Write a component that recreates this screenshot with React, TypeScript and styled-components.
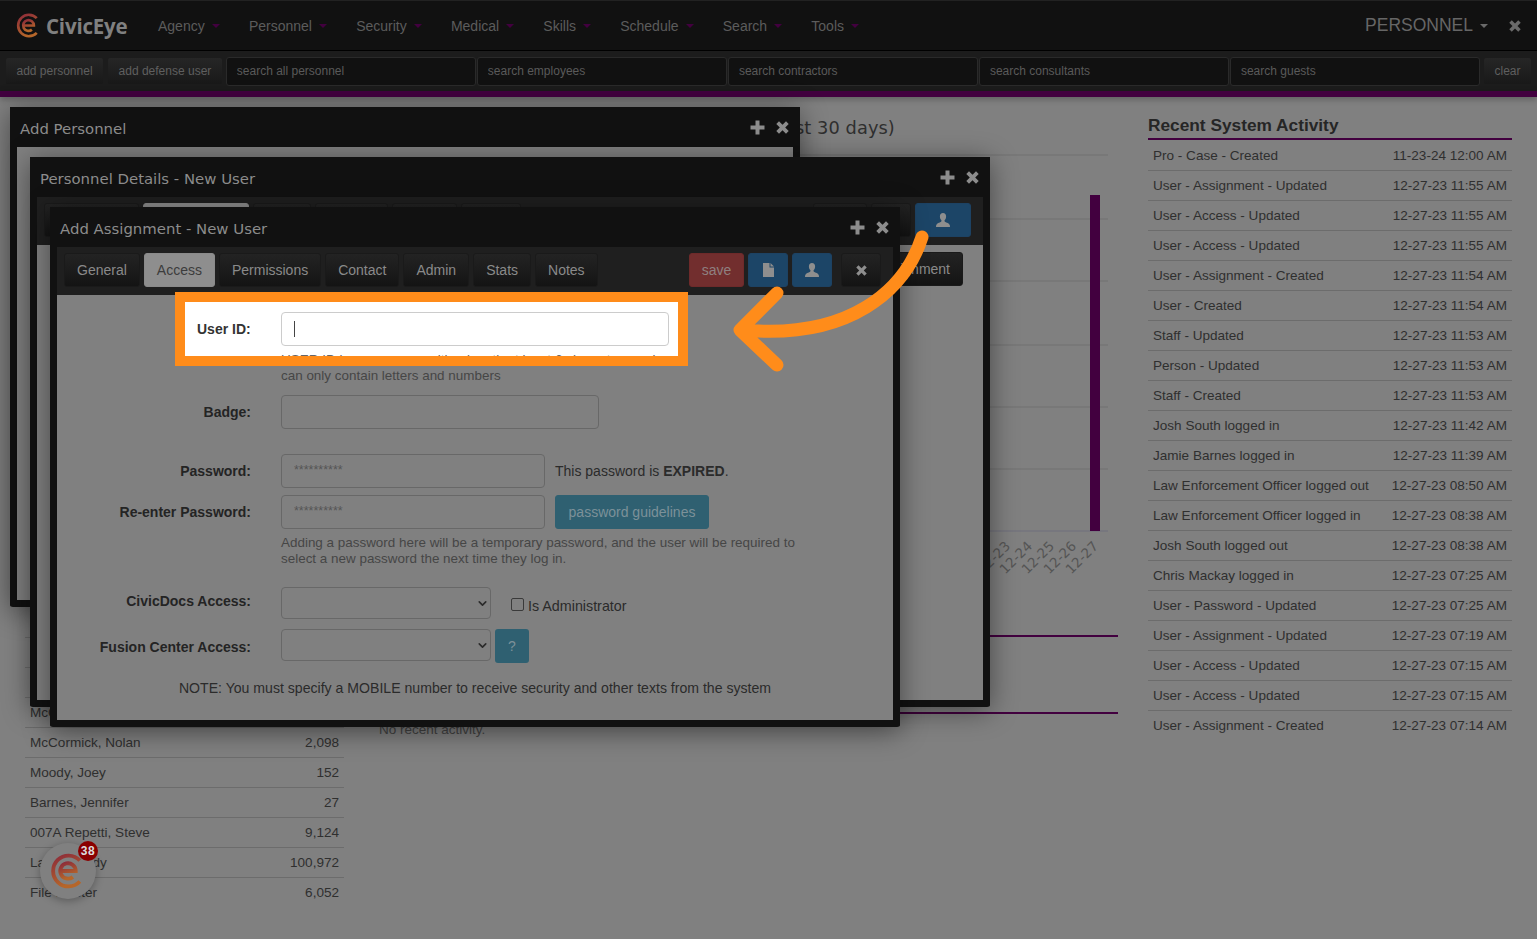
import React from 'react';
import styled, { createGlobalStyle } from 'styled-components';
import { ChevronDown } from 'lucide-react';

const NAV_ITEMS = ['Agency', 'Personnel', 'Security', 'Medical', 'Skills', 'Schedule', 'Search', 'Tools'];
const SEARCHES = ['search all personnel', 'search employees', 'search contractors', 'search consultants', 'search guests'];
const TABS = ['General', 'Access', 'Permissions', 'Contact', 'Admin', 'Stats', 'Notes'];
const CHART_LINES = [5, 69, 131, 195, 257, 319];
const CHART_LABELS = [['12-23', 632], ['12-24', 654], ['12-25', 676], ['12-26', 698], ['12-27', 720]] as const;

const USERS = [
    ['', ''],
    ['', ''],
    ['', ''],
    ['McCoy', ''],
    ['McCormick, Nolan', '2,098'],
    ['Moody, Joey', '152'],
    ['Barnes, Jennifer', '27'],
    ['007A Repetti, Steve', '9,124'],
    ['Lamar, Cody', '100,972'],
    ['File Master', '6,052'],
];

const ACTIVITY = [
    ['Pro - Case - Created', '11-23-24 12:00 AM'],
    ['User - Assignment - Updated', '12-27-23 11:55 AM'],
    ['User - Access - Updated', '12-27-23 11:55 AM'],
    ['User - Access - Updated', '12-27-23 11:55 AM'],
    ['User - Assignment - Created', '12-27-23 11:54 AM'],
    ['User - Created', '12-27-23 11:54 AM'],
    ['Staff - Updated', '12-27-23 11:53 AM'],
    ['Person - Updated', '12-27-23 11:53 AM'],
    ['Staff - Created', '12-27-23 11:53 AM'],
    ['Josh South logged in', '12-27-23 11:42 AM'],
    ['Jamie Barnes logged in', '12-27-23 11:39 AM'],
    ['Law Enforcement Officer logged out', '12-27-23 08:50 AM'],
    ['Law Enforcement Officer logged in', '12-27-23 08:38 AM'],
    ['Josh South logged out', '12-27-23 08:38 AM'],
    ['Chris Mackay logged in', '12-27-23 07:25 AM'],
    ['User - Password - Updated', '12-27-23 07:25 AM'],
    ['User - Assignment - Updated', '12-27-23 07:19 AM'],
    ['User - Access - Updated', '12-27-23 07:15 AM'],
    ['User - Access - Updated', '12-27-23 07:15 AM'],
    ['User - Assignment - Created', '12-27-23 07:14 AM'],
];

const LogoMark = ({ size, id }: { size: number; id: string }) => (
    <svg width={size} height={size} viewBox="0 0 28 28" fill="none">
        <defs>
            <linearGradient id={id} x1="0" y1="0" x2="0.4" y2="1">
                <stop offset="0" stopColor="#8c2a3a" />
                <stop offset="1" stopColor="#b5662a" />
            </linearGradient>
        </defs>
        <path d="M23.2 5.8A12 12 0 1 0 23.2 22.2" stroke={`url(#${id})`} strokeWidth="3" />
        <path d="M9 14H20A6 6 0 1 0 17.8 18.6" stroke={`url(#${id})`} strokeWidth="3" />
    </svg>
);

const PlusIcon = () => (
    <svg width="15" height="15" viewBox="0 0 15 15" fill="currentColor">
        <path d="M5.5 0.5h4v5h5v4h-5v5h-4v-5h-5v-4h5z" />
    </svg>
);

const CloseIcon = ({ size = 13 }: { size?: number }) => (
    <svg width={size} height={size} viewBox="0 0 13 13" fill="currentColor">
        <path d="M3 0.3 6.5 3.8 10 0.3 12.7 3 9.2 6.5 12.7 10 10 12.7 6.5 9.2 3 12.7 0.3 10 3.8 6.5 0.3 3z" />
    </svg>
);

const UserIcon = () => (
    <svg width="14" height="14" viewBox="0 0 14 14" fill="currentColor">
        <path d="M7 0C5 0 3.900 1.400 3.900 3.400c0 1.500.6 3 1.500 3.900.2.6.1 1.200-.3 1.500C3.600 9.700.6 10.300.1 12.400L0 14h14l-.1-1.600c-.5-2.100-3.500-2.700-5-3.600-.4-.3-.5-.9-.3-1.500.9-.9 1.500-2.400 1.500-3.900C10.100 1.400 9 0 7 0z" />
    </svg>
);

const FileIcon = () => (
    <svg width="11" height="14" viewBox="0 0 11 14" fill="currentColor">
        <path d="M0 0h6.500v4.500H11V14H0zM7.500 0 11 3.500H7.500z" />
    </svg>
);

const App: React.FC = () => {
    return <Page>
        <GlobalStyle />
        <TopBar>
            <Brand><LogoMark size={25} id="brand-grad" /><BrandName>CivicEye</BrandName></Brand>
            <NavList>
                {NAV_ITEMS.map(item => <NavItem key={item}>{item}<Caret /></NavItem>)}
            </NavList>
            <ModuleName>PERSONNEL<Caret $grey /></ModuleName>
            <TopClose><CloseIcon size={12} /></TopClose>
        </TopBar>
        <SearchBar>
            <BarButton>add personnel</BarButton>
            <BarButton>add defense user</BarButton>
            {SEARCHES.map(s => <SearchInput key={s} placeholder={s} />)}
            <ClearButton>clear</ClearButton>
        </SearchBar>
        <AccentStrip />

        <Columns>
            <LeftColumn>
                {USERS.map(([name, count], i) => <ListRow key={i}><span>{name}</span><span>{count}</span></ListRow>)}
            </LeftColumn>
            <MiddleColumn>
                <ChartTitle>Personnel Logins and Assignments Created (last 30 days)</ChartTitle>
                <svg width="739" height="440" viewBox="0 0 739 440">
                    {CHART_LINES.map(y => <line key={y} x1="0" x2="729" y1={y} y2={y} stroke="#707070" />)}
                    <line x1="0" x2="729" y1="381" y2="381" stroke="#6f6f7d" />
                    <rect x="711" y="45" width="10" height="336" fill="#42003f" />
                    {CHART_LABELS.map(([label, x]) => (
                        <text key={label} x={x} y="397" transform={`rotate(-45 ${x} 397)`} textAnchor="end" fontSize="13.500" fontFamily="'DejaVu Sans', sans-serif" fill="#555">{label}</text>
                    ))}
                </svg>
                <SectionRule $top={42} />
                <SectionRule $top={75} />
                <EmptyNote>No recent activity.</EmptyNote>
            </MiddleColumn>
            <RightColumn>
                <ActivityTitle>Recent System Activity</ActivityTitle>
                {ACTIVITY.map(([what, when], i) => <ListRow key={i}><span>{what}</span><span>{when}</span></ListRow>)}
            </RightColumn>
        </Columns>

        <Win $left={10} $top={107} $width={790} $height={500}>
            <WinHeader><WinTitle>Add Personnel</WinTitle><WinActions><PlusIcon /><CloseIcon /></WinActions></WinHeader>
        </Win>

        <Win $left={30} $top={157} $width={960} $height={550}>
            <WinHeader><WinTitle>Personnel Details - New User</WinTitle><WinActions><PlusIcon /><CloseIcon /></WinActions></WinHeader>
            <Toolbar>
                <Tab $width={95} />
                <Tab $width={106} $active />
                <Tab $width={58} />
                <Tab $width={73} />
                <Tab $width={65} />
                <Tab $width={60} />
                <ToolbarSpacer />
                <Tab $width={54} />
                <Tab $width={40} />
                <ToolButton $wide $blue><UserIcon /></ToolButton>
            </Toolbar>
            <AssignmentRow><Tab>Add Assignment</Tab></AssignmentRow>
        </Win>

        <Win $left={50} $top={207} $width={850} $height={520}>
            <WinHeader><WinTitle>Add Assignment - New User</WinTitle><WinActions><PlusIcon /><CloseIcon /></WinActions></WinHeader>
            <Toolbar>
                {TABS.map(tab => <Tab key={tab} $active={tab === 'Access'}>{tab}</Tab>)}
                <ToolbarSpacer />
                <SaveButton>save</SaveButton>
                <ToolButton $blue><FileIcon /></ToolButton>
                <ToolButton $blue><UserIcon /></ToolButton>
                <ToolButton $gapLeft><CloseIcon size={11} /></ToolButton>
            </Toolbar>
            <FormBody>
                <Spotlight>
                    <SpotlightRow>
                        <SpotlightLabel>User ID:</SpotlightLabel>
                        <SpotlightField><Cursor /></SpotlightField>
                    </SpotlightRow>
                    <SpotlightHelp>USER ID is a username with a length at least 6 characters and</SpotlightHelp>
                </Spotlight>
                <HelpText $top={73}>can only contain letters and numbers</HelpText>
                <FormRow $top={11}>
                    <FieldLabel $pad={9}>Badge:</FieldLabel>
                    <FieldGroup><TextField $width={318} /></FieldGroup>
                </FormRow>
                <FormRow $top={25}>
                    <FieldLabel $pad={9}>Password:</FieldLabel>
                    <FieldGroup>
                        <TextField $width={264} $mask value="**********" readOnly />
                        <StatusText>This password is <b>EXPIRED</b>.</StatusText>
                    </FieldGroup>
                </FormRow>
                <FormRow $top={7}>
                    <FieldLabel $pad={9}>Re-enter Password:</FieldLabel>
                    <FieldGroup>
                        <TextField $width={264} $mask value="**********" readOnly />
                        <TealButton>password guidelines</TealButton>
                    </FieldGroup>
                </FormRow>
                <HelpText $top={6}>Adding a password here will be a temporary password, and the user will be required to<br />select a new password the next time they log in.</HelpText>
                <FormRow $top={20}>
                    <FieldLabel $pad={6}>CivicDocs Access:</FieldLabel>
                    <FieldGroup>
                        <SelectWrap><SelectField /><SelectChevron size={13} strokeWidth={3} /></SelectWrap>
                        <AdminCheck><CheckBox type="checkbox" />Is Administrator</AdminCheck>
                    </FieldGroup>
                </FormRow>
                <FormRow $top={10}>
                    <FieldLabel $pad={10}>Fusion Center Access:</FieldLabel>
                    <FusionGroup>
                        <SelectWrap><SelectField /><SelectChevron size={13} strokeWidth={3} /></SelectWrap>
                        <HelpButton>?</HelpButton>
                    </FusionGroup>
                </FormRow>
                <FormNote>NOTE: You must specify a MOBILE number to receive security and other texts from the system</FormNote>
            </FormBody>
        </Win>

        <ArrowOverlay width="1537" height="939" viewBox="0 0 1537 939" fill="none">
            <path d="M922 237C905 290 850 340 742 330M777 293 740 330 777 365" stroke="#ff8c1a" strokeWidth="13" strokeLinecap="round" strokeLinejoin="round" />
        </ArrowOverlay>

        <ChatBubble>
            <LogoMark size={36} id="chat-grad" />
            <ChatBadge>38</ChatBadge>
        </ChatBubble>
    </Page>;
}

const GlobalStyle = createGlobalStyle`
    html, body {
        margin: 0;
        height: 100%;
        overflow: hidden;
        background: #808080;
    }
    * {
        box-sizing: border-box;
    }
`;

const Page = styled.div`
    position: relative;
    width: 1537px;
    height: 939px;
    overflow: hidden;
    background: #808080;
    color: #2b2b2b;
    font-family: "Liberation Sans", Arial, sans-serif;
    font-size: 14px;
`;

const TopBar = styled.div`
    display: flex;
    align-items: center;
    height: 51px;
    padding: 0 16px;
    background: #111;
    border-top: 1px solid #222;
    border-bottom: 1px solid #000;
`;

const Brand = styled.div`
    display: flex;
    align-items: center;
    gap: 5px;
    width: 142px;
`;

const BrandName = styled.span`
    font-family: "Open Sans", sans-serif;
    font-size: 20.500px;
    font-weight: 700;
    letter-spacing: -0.2px;
    color: #808080;
`;

const NavList = styled.nav`
    display: flex;
    flex: 1;
`;

const NavItem = styled.span`
    display: flex;
    align-items: center;
    margin-right: 29.200px;
    color: #5c5c5c;
`;

const Caret = styled.i<{ $grey?: boolean }>`
    width: 0;
    height: 0;
    margin-left: 7px;
    border-top: 4px solid ${p => p.$grey ? '#6a6a6a' : '#42003f'};
    border-left: 4px solid transparent;
    border-right: 4px solid transparent;
`;

const ModuleName = styled.div`
    display: flex;
    align-items: center;
    font-size: 17.500px;
    color: #666;
`;

const TopClose = styled.span`
    display: flex;
    margin-left: 21px;
    color: #6a6a6a;
`;

const SearchBar = styled.div`
    display: flex;
    align-items: center;
    gap: 3px;
    height: 40px;
    padding: 0 5px;
    background: #1c1c1c;
`;

const BarButton = styled.button`
    flex: none;
    height: 28px;
    padding: 0 10.500px;
    border: 1px solid #1c1c1c;
    border-radius: 3px;
    background: linear-gradient(#262626, #191919);
    color: #5f5f5f;
    font: 12px "Liberation Sans", Arial, sans-serif;
`;

const ClearButton = styled(BarButton)`
    margin-left: 2px;
`;

const SearchInput = styled.input`
    flex: 1;
    min-width: 0;
    height: 29px;
    margin-right: -2px;
    padding: 0 10px;
    border: 1px solid #2a2a2a;
    border-radius: 3px;
    background: #111;
    font: 12px "Liberation Sans", Arial, sans-serif;

    &::placeholder {
        color: #5a5a5a;
    }
`;

const AccentStrip = styled.div`
    height: 6px;
    background: #42003f;
    box-shadow: 0 2px 6px rgba(0, 0, 0, .3);
`;

const Columns = styled.main`
    display: grid;
    grid-template-columns: 354px 769px 364px;
    padding-left: 25px;
`;

const LeftColumn = styled.section`
    padding: 511px 35px 0 0;
`;

const MiddleColumn = styled.section`
    padding: 20px 30px 0 0;
`;

const RightColumn = styled.section`
    padding-top: 17px;
`;

const ListRow = styled.div`
    display: flex;
    justify-content: space-between;
    align-items: center;
    height: 30px;
    padding: 0 5px;
    border-bottom: 1px solid #6c6c6c;
    font-size: 13.550px;
    color: #2f2f2f;
    white-space: nowrap;

    &:last-child {
        border-bottom-color: transparent;
    }
`;

const ChartTitle = styled.h2`
    margin: 0 0 11px;
    height: 22px;
    font: 400 17.800px/22px "DejaVu Sans", sans-serif;
    letter-spacing: .07px;
    color: #2f2f2f;
    white-space: nowrap;
`;

const SectionRule = styled.hr<{ $top: number }>`
    margin: ${p => p.$top}px 0 0;
    height: 2px;
    border: 0;
    background: #42003f;
`;

const EmptyNote = styled.p`
    margin: 8px 0 0;
    font-size: 13.500px;
    line-height: 16px;
    color: #444;
`;

const ActivityTitle = styled.h3`
    margin: 0 0 1px;
    height: 26px;
    border-bottom: 2px solid #42003f;
    font-size: 17.300px;
    line-height: 23px;
    font-weight: 700;
    color: #262626;
`;

const Win = styled.section<{ $left: number; $top: number; $width: number; $height: number }>`
    position: absolute;
    left: ${p => p.$left}px;
    top: ${p => p.$top}px;
    width: ${p => p.$width}px;
    height: ${p => p.$height}px;
    display: flex;
    flex-direction: column;
    border: 7px solid #111;
    border-top: 0;
    border-radius: 3px;
    background: #808080;
    box-shadow: 0 4px 28px rgba(0, 0, 0, .45);
`;

const WinHeader = styled.header`
    flex: none;
    display: flex;
    align-items: center;
    justify-content: space-between;
    height: 40px;
    margin: 0 -7px;
    padding: 4px 11px 0 10px;
    background: #111;
`;

const WinTitle = styled.h4`
    margin: 0;
    font: 400 14.900px "DejaVu Sans", sans-serif;
    color: #8c8c8c;
`;

const WinActions = styled.div`
    display: flex;
    align-items: center;
    gap: 11px;
    margin-top: -4px;
    color: #8c8c8c;
`;

const Toolbar = styled.div`
    flex: none;
    display: flex;
    align-items: flex-start;
    gap: 4px;
    height: 48px;
    padding: 6px 12px 6px 7px;
    background: #1f1f1f;
`;

const ToolbarSpacer = styled.div`
    flex: 1;
`;

const Tab = styled.button<{ $active?: boolean; $width?: number }>`
    flex: none;
    display: flex;
    align-items: center;
    justify-content: center;
    height: 34px;
    width: ${p => p.$width ? `${p.$width}px` : 'auto'};
    padding: 0 12px;
    border: 1px solid ${p => p.$active ? '#8a8a8a' : '#1a1a1a'};
    border-radius: 3px;
    background: ${p => p.$active ? '#8e8e8e' : 'linear-gradient(#232323, #141414)'};
    color: ${p => p.$active ? '#3c3c3c' : '#8a8a8a'};
    font: 14px "Liberation Sans", Arial, sans-serif;
`;

const SaveButton = styled.button`
    width: 55px;
    height: 34px;
    border: 1px solid #6e2a2a;
    border-radius: 3px;
    background: #722e2e;
    color: #8f8080;
    font: 14px "Liberation Sans", Arial, sans-serif;
`;

const ToolButton = styled.button<{ $blue?: boolean; $wide?: boolean; $gapLeft?: boolean }>`
    display: flex;
    align-items: center;
    justify-content: center;
    flex: none;
    width: ${p => p.$wide ? 56 : 40}px;
    height: 34px;
    margin-left: ${p => p.$gapLeft ? 5 : 0}px;
    padding: 0;
    border: 1px solid ${p => p.$blue ? '#1d4263' : '#1a1a1a'};
    border-radius: 3px;
    background: ${p => p.$blue ? '#1c4567' : 'linear-gradient(#232323, #141414)'};
    color: #8e8e8e;
`;

const AssignmentRow = styled.div`
    display: flex;
    justify-content: flex-end;
    padding: 7px 20px 0 0;
`;

const FormBody = styled.div`
    position: relative;
    flex: 1;
`;

const Spotlight = styled.div`
    position: absolute;
    left: 118px;
    top: -3px;
    width: 513px;
    height: 74px;
    padding: 10px 9px 0 12px;
    overflow: hidden;
    border: 10px solid #ff8c1a;
    background: #fff;
`;

const SpotlightRow = styled.div`
    display: flex;
    align-items: center;
`;

const SpotlightLabel = styled.label`
    width: 84px;
    flex: none;
    font-weight: 700;
    color: #333;
`;

const SpotlightField = styled.div`
    display: flex;
    align-items: center;
    width: 388px;
    height: 34px;
    padding-left: 12px;
    border: 1px solid #ccc;
    border-radius: 4px;
    background: #fff;
`;

const Cursor = styled.i`
    width: 1px;
    height: 16px;
    background: #444;
`;

const SpotlightHelp = styled.div`
    margin: 6px 0 0 84px;
    font-size: 13.500px;
    line-height: 16px;
    color: #666;
    white-space: nowrap;
`;

const HelpText = styled.p<{ $top: number }>`
    margin: ${p => p.$top}px 0 0 224px;
    font-size: 13.450px;
    line-height: 16px;
    color: #464646;
`;

const FormRow = styled.div<{ $top: number }>`
    display: grid;
    grid-template-columns: 194px 1fr;
    column-gap: 30px;
    align-items: start;
    margin-top: ${p => p.$top}px;
`;

const FieldLabel = styled.label<{ $pad: number }>`
    padding-top: ${p => p.$pad}px;
    text-align: right;
    font-weight: 700;
    line-height: 16px;
    color: #242424;
`;

const FieldGroup = styled.div`
    display: flex;
    align-items: center;
    gap: 10px;
`;

const FusionGroup = styled(FieldGroup)`
    align-items: flex-start;
    gap: 4px;
`;

const TextField = styled.input<{ $width: number; $mask?: boolean }>`
    width: ${p => p.$width}px;
    height: 34px;
    padding: 0 12px ${p => p.$mask ? 2 : 0}px;
    border: 1px solid #686868;
    border-radius: 4px;
    background: transparent;
    color: #555;
    font: 12.500px "Liberation Sans", Arial, sans-serif;
    outline: none;
`;

const StatusText = styled.span`
    color: #2b2b2b;
`;

const TealButton = styled.button`
    width: 154px;
    height: 34px;
    border: 1px solid #2f6071;
    border-radius: 3px;
    background: #2f6071;
    color: #7c9199;
    font: 14px "Liberation Sans", Arial, sans-serif;
`;

const SelectWrap = styled.div`
    position: relative;
    display: flex;
    width: 210px;
`;

const SelectField = styled.select`
    width: 100%;
    height: 32px;
    border: 1px solid #686868;
    border-radius: 4px;
    background: transparent;
    appearance: none;
`;

const SelectChevron = styled(ChevronDown)`
    position: absolute;
    right: 2px;
    top: 10px;
    color: #2b2b2b;
`;

const AdminCheck = styled.label`
    display: flex;
    align-items: center;
    gap: 4px;
    margin: 5px 0 0 10px;
    font-size: 14.300px;
    color: #2b2b2b;
`;

const CheckBox = styled.input`
    width: 13px;
    height: 13px;
    margin: -2px 0 0;
    border: 1px solid #3a3a3a;
    border-radius: 2px;
    background: transparent;
    appearance: none;
`;

const HelpButton = styled.button`
    width: 34px;
    height: 34px;
    padding: 0;
    border: 0;
    border-radius: 3px;
    background: #2f6071;
    color: #7c9199;
    font: 14px "Liberation Sans", Arial, sans-serif;
`;

const FormNote = styled.p`
    margin: 17px 0 0;
    text-align: center;
    font-size: 14.100px;
    line-height: 16px;
    color: #2b2b2b;
`;

const ArrowOverlay = styled.svg`
    position: absolute;
    left: 0;
    top: 0;
    pointer-events: none;
`;

const ChatBubble = styled.div`
    position: absolute;
    left: 40px;
    top: 843px;
    display: flex;
    align-items: center;
    justify-content: center;
    width: 56px;
    height: 56px;
    border-radius: 50%;
    background: #808080;
    box-shadow: 0 2px 8px rgba(0, 0, 0, .3);
`;

const ChatBadge = styled.span`
    position: absolute;
    left: 38px;
    top: -2px;
    width: 20px;
    height: 20px;
    border-radius: 50%;
    background: #8a0000;
    color: #ddd;
    font-size: 12px;
    font-weight: 700;
    line-height: 20px;
    text-align: center;
    letter-spacing: .5px;
`;

export default App;
